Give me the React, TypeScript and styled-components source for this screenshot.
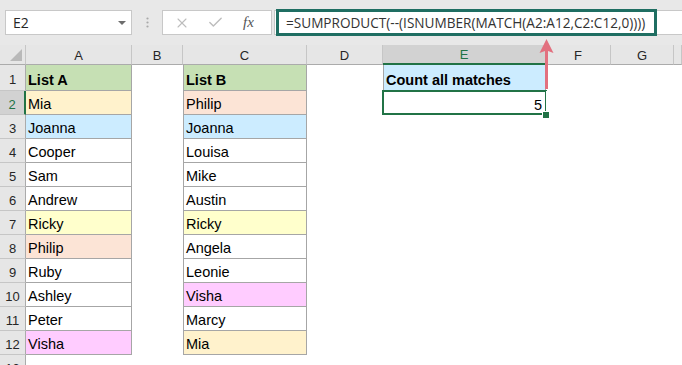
import { createGlobalStyle, styled } from "styled-components";
import { X, Check } from "lucide-react";

const GlobalStyle = createGlobalStyle`
  html, body {
    margin: 0;
    padding: 0;
    background: #fff;
    overflow: hidden;
  }
`;

const Window = styled.div`
  position: relative;
  width: 682px;
  height: 365px;
  overflow: hidden;
  background: #fff;
  font-family: "Liberation Sans", Arial, sans-serif;
`;

const Toolbar = styled.div`
  display: flex;
  align-items: center;
  height: 45px;
  padding-left: 5px;
  box-sizing: border-box;
  background: #e8e8e8;
`;

const NameBox = styled.div`
  display: flex;
  align-items: center;
  justify-content: space-between;
  width: 127px;
  height: 25px;
  box-sizing: border-box;
  padding: 0 5px 0 7px;
  background: #fff;
  border: 1px solid #c8c8c8;
  font-family: "Open Sans", sans-serif;
  font-size: 14px;
  color: #262626;
`;

const DropArrow = styled.span`
  width: 0;
  height: 0;
  border-left: 4px solid transparent;
  border-right: 4px solid transparent;
  border-top: 4px solid #6d6d6d;
`;

const Grip = styled.div`
  display: flex;
  justify-content: center;
  width: 30px;
`;

const FxBox = styled.div`
  display: flex;
  align-items: center;
  width: 110px;
  height: 25px;
  box-sizing: border-box;
  padding-left: 11px;
  gap: 17px;
  background: #fff;
  border: 1px solid #c8c8c8;
  color: #bdbdbd;
`;

const FxLabel = styled.span`
  font-family: "Liberation Serif", serif;
  font-style: italic;
  font-size: 15px;
  color: #555;
  margin-left: 2px;
`;

const FormulaInput = styled.div`
  display: flex;
  align-items: center;
  flex: 1;
  height: 25px;
  margin-left: 2px;
  box-sizing: border-box;
  background: #fff;
  border: 1px solid #c8c8c8;
  border-right: none;
`;

const Highlight = styled.div`
  display: flex;
  align-items: center;
  width: 381px;
  height: 27px;
  margin-left: 1px;
  box-sizing: border-box;
  padding-left: 7px;
  border: 3px solid #1f6e62;
  font-family: "Open Sans", sans-serif;
  font-size: 13.6px;
  color: #333;
  white-space: nowrap;
  overflow: hidden;
`;

const Sheet = styled.div`
  display: grid;
  grid-template-columns: 26px 106px 51px 124px 76px 163px 65px 63px 1fr;
  grid-template-rows: 20px 26px repeat(12, 24px);
`;

const Corner = styled.div`
  position: relative;
  background: #e6e6e6;
  border-right: 1px solid #c6c6c6;
  border-bottom: 1px solid #ababab;
  box-sizing: border-box;

  &::after {
    content: "";
    position: absolute;
    right: 3px;
    bottom: 3px;
    width: 0;
    height: 0;
    border-left: 12px solid transparent;
    border-bottom: 12px solid #b9b9b9;
  }
`;

const ColHead = styled.div<{ $selected?: boolean }>`
  display: flex;
  align-items: center;
  justify-content: center;
  box-sizing: border-box;
  background: ${({ $selected }) => ($selected ? "#d2d2d2" : "#e6e6e6")};
  color: ${({ $selected }) => ($selected ? "#217346" : "#262626")};
  border-right: 1px solid #c6c6c6;
  border-bottom: ${({ $selected }) => ($selected ? "2px solid #217346" : "1px solid #ababab")};
  font-size: 13px;
  padding-top: 1px;
`;

const RowHead = styled.div<{ $selected?: boolean }>`
  display: flex;
  align-items: center;
  justify-content: center;
  box-sizing: border-box;
  padding-top: 3px;
  background: ${({ $selected }) => ($selected ? "#d2d2d2" : "#e6e6e6")};
  color: ${({ $selected }) => ($selected ? "#217346" : "#262626")};
  border-right: ${({ $selected }) => ($selected ? "2px solid #217346" : "1px solid #ababab")};
  border-bottom: 1px solid #c6c6c6;
  font-size: 13px;
`;

const Cell = styled.div<{
  $bg?: string;
  $boxed?: boolean;
  $leftLine?: boolean;
  $bold?: boolean;
  $right?: boolean;
  $selected?: boolean;
}>`
  position: relative;
  display: flex;
  align-items: flex-end;
  justify-content: ${({ $right }) => ($right ? "flex-end" : "flex-start")};
  box-sizing: border-box;
  padding: 0 ${({ $right }) => ($right ? "4px" : "2px")} 1px 2px;
  background: ${({ $bg }) => $bg ?? "#fff"};
  border-right: ${({ $boxed }) => ($boxed ? "1px solid #a6a6a6" : "none")};
  border-bottom: ${({ $boxed }) => ($boxed ? "1px solid #a6a6a6" : "none")};
  border-left: ${({ $leftLine }) => ($leftLine ? "1px solid #a6a6a6" : "none")};
  font-size: 14.5px;
  line-height: 18px;
  font-weight: ${({ $bold }) => ($bold ? 700 : 400)};
  color: #000;
  white-space: nowrap;

  ${({ $selected }) =>
    $selected &&
    `
    &::after {
      content: "";
      position: absolute;
      inset: -1px -1px 0 -1px;
      border: 2px solid #217346;
    }
  `}
`;

const Handle = styled.span`
  position: absolute;
  right: -4px;
  bottom: -4px;
  width: 6px;
  height: 6px;
  background: #217346;
  border: 1px solid #fff;
  z-index: 2;
`;

const Arrow = styled.svg`
  position: absolute;
  left: 539px;
  top: 39px;
`;

const GREEN = "#c6e0b4";
const YELLOW = "#fff2cc";
const BLUE = "#ccecff";
const PEACH = "#fce4d6";
const LEMON = "#ffffcc";
const PINK = "#ffccff";

type Item = { name: string; bg?: string };

const listA: Item[] = [
  { name: "Mia", bg: YELLOW },
  { name: "Joanna", bg: BLUE },
  { name: "Cooper" },
  { name: "Sam" },
  { name: "Andrew" },
  { name: "Ricky", bg: LEMON },
  { name: "Philip", bg: PEACH },
  { name: "Ruby" },
  { name: "Ashley" },
  { name: "Peter" },
  { name: "Visha", bg: PINK },
];

const listB: Item[] = [
  { name: "Philip", bg: PEACH },
  { name: "Joanna", bg: BLUE },
  { name: "Louisa" },
  { name: "Mike" },
  { name: "Austin" },
  { name: "Ricky", bg: LEMON },
  { name: "Angela" },
  { name: "Leonie" },
  { name: "Visha", bg: PINK },
  { name: "Marcy" },
  { name: "Mia", bg: YELLOW },
];

const columns = ["A", "B", "C", "D", "E", "F", "G", ""];

function App() {
  const rows = [];
  for (let r = 1; r <= 13; r++) {
    const a = r >= 2 && r <= 12 ? listA[r - 2] : undefined;
    const c = r >= 2 && r <= 12 ? listB[r - 2] : undefined;
    rows.push(
      <RowHead key={`h${r}`} $selected={r === 2}>
        {r}
      </RowHead>
    );
    if (r === 1) {
      rows.push(
        <Cell key="a1" $bg={GREEN} $boxed $bold>
          List A
        </Cell>,
        <Cell key="b1" />,
        <Cell key="c1" $bg={GREEN} $boxed $leftLine $bold>
          List B
        </Cell>,
        <Cell key="d1" />,
        <Cell key="e1" $bg={BLUE} $boxed $leftLine $bold>
          Count all matches
        </Cell>
      );
    } else if (r <= 12) {
      rows.push(
        <Cell key={`a${r}`} $bg={a?.bg} $boxed>
          {a?.name}
        </Cell>,
        <Cell key={`b${r}`} />,
        <Cell key={`c${r}`} $bg={c?.bg} $boxed $leftLine>
          {c?.name}
        </Cell>,
        <Cell key={`d${r}`} />
      );
      if (r === 2) {
        rows.push(
          <Cell key="e2" $right $selected>
            5
            <Handle />
          </Cell>
        );
      } else {
        rows.push(<Cell key={`e${r}`} />);
      }
    } else {
      rows.push(<Cell key="a13" />, <Cell key="b13" />, <Cell key="c13" />, <Cell key="d13" />, <Cell key="e13" />);
    }
    rows.push(<Cell key={`f${r}`} />, <Cell key={`g${r}`} />, <Cell key={`x${r}`} />);
  }

  return (
    <>
      <GlobalStyle />
      <Window>
        <Toolbar>
          <NameBox>
            E2
            <DropArrow />
          </NameBox>
          <Grip>
            <svg width="3" height="11" viewBox="0 0 3 11">
              <circle cx="1.5" cy="1.5" r="1.1" fill="#a9a9a9" />
              <circle cx="1.5" cy="5.5" r="1.1" fill="#a9a9a9" />
              <circle cx="1.5" cy="9.5" r="1.1" fill="#a9a9a9" />
            </svg>
          </Grip>
          <FxBox>
            <X size={16} strokeWidth={1.6} />
            <Check size={17} strokeWidth={2} />
            <FxLabel>fx</FxLabel>
          </FxBox>
          <FormulaInput>
            <Highlight>=SUMPRODUCT(--(ISNUMBER(MATCH(A2:A12,C2:C12,0))))</Highlight>
          </FormulaInput>
        </Toolbar>

        <Sheet>
          <Corner />
          {columns.map((col) => (
            <ColHead key={col || "h"} $selected={col === "E"}>
              {col}
            </ColHead>
          ))}
          {rows}
        </Sheet>

        <Arrow width="15" height="50" viewBox="0 0 15 50">
          <polygon points="7.5,0 14.5,14 9,12 9,50 6,50 6,12 0.5,14" fill="#e2707f" />
        </Arrow>
      </Window>
    </>
  );
}

export default App;
